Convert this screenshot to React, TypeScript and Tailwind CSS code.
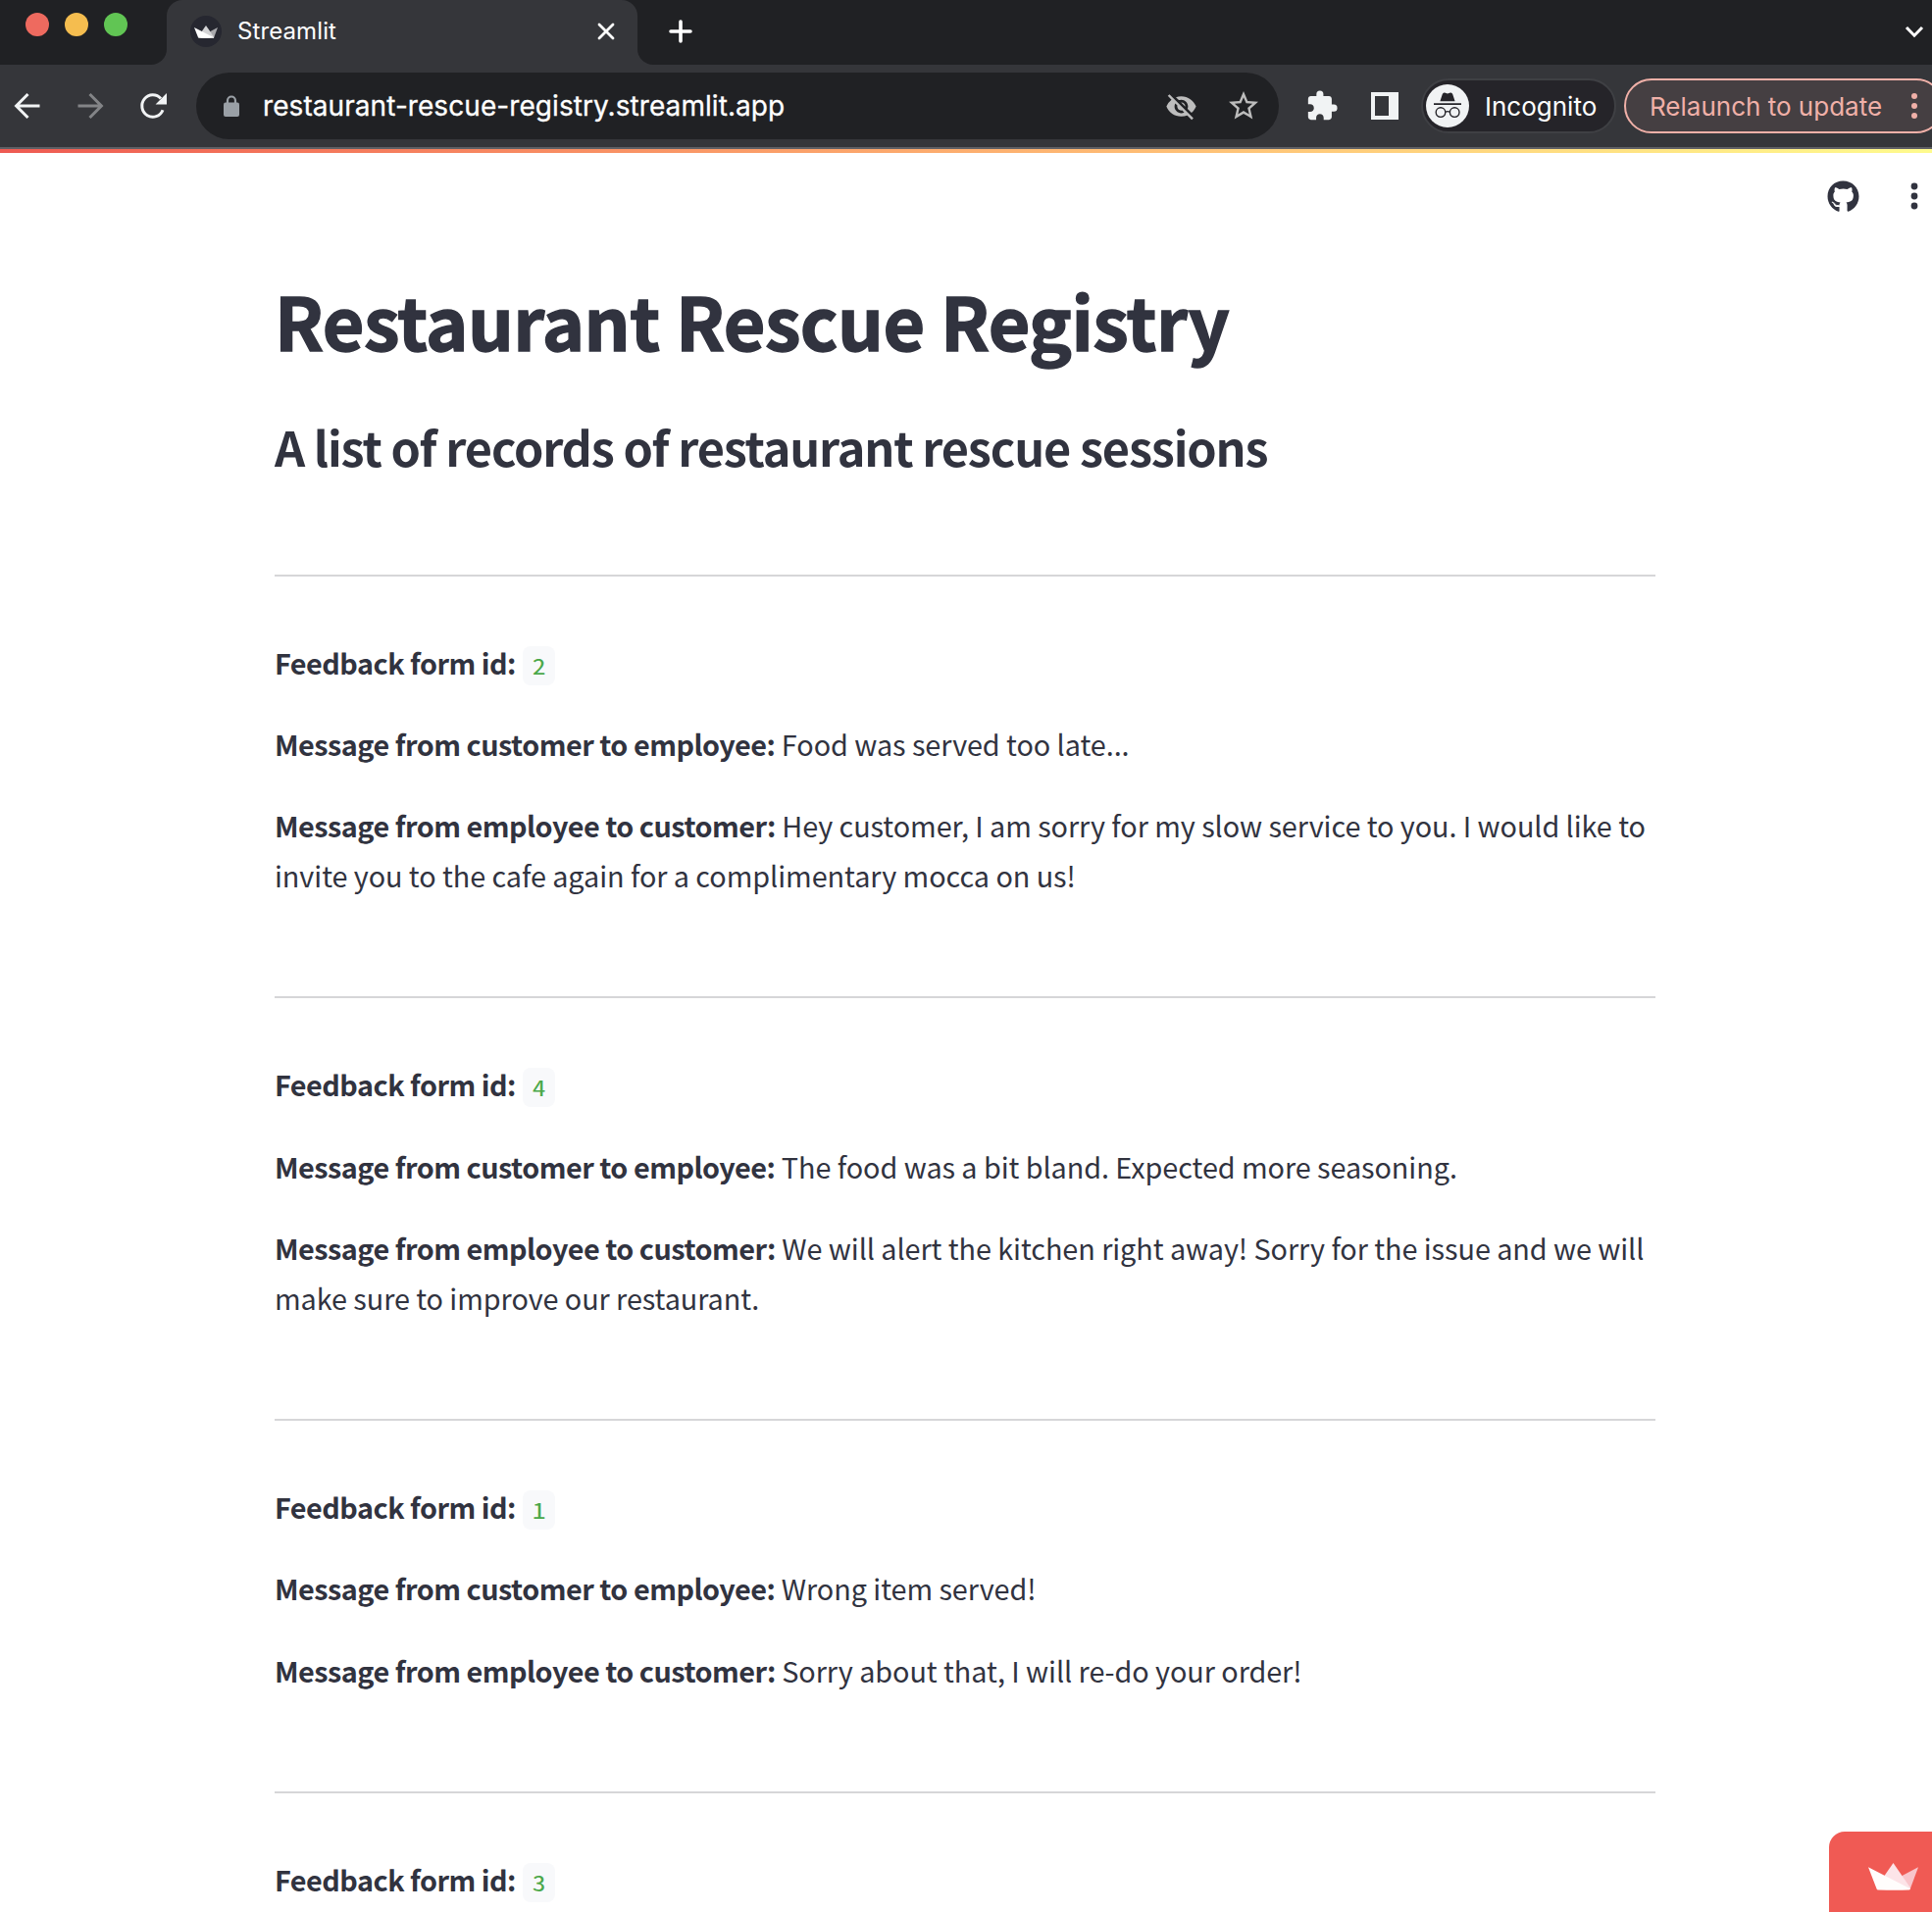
import { FaGithub } from "react-icons/fa";
import { MdExtension, MdStarBorder, MdVisibilityOff } from "react-icons/md";

type Entry = { id: number; fromCustomer: string; fromEmployee: string[] };

const entries: Entry[] = [
  {
    id: 2,
    fromCustomer: "Food was served too late...",
    fromEmployee: [
      "Hey customer, I am sorry for my slow service to you. I would like to",
      "invite you to the cafe again for a complimentary mocca on us!",
    ],
  },
  {
    id: 4,
    fromCustomer: "The food was a bit bland. Expected more seasoning.",
    fromEmployee: [
      "We will alert the kitchen right away! Sorry for the issue and we will",
      "make sure to improve our restaurant.",
    ],
  },
  {
    id: 1,
    fromCustomer: "Wrong item served!",
    fromEmployee: ["Sorry about that, I will re-do your order!"],
  },
  { id: 3, fromCustomer: "", fromEmployee: [] },
];

function Crown({ className, shades }: { className: string; shades: [string, string, string] }) {
  return (
    <svg className={className} viewBox="0 0 51 28" preserveAspectRatio="none">
      <path d="M51 4.2 34 13.2 42.6 27Z" fill={shades[2]} />
      <path d="M25.5 0 15.8 14 42.2 27.2 43 25.4Z" fill={shades[1]} />
      <path d="M0 4.2 42.8 26.2Q42.5 27.6 41.5 27.6 25.5 28.2 10 27.4 9 27.3 8.6 26.4Z" fill={shades[0]} />
    </svg>
  );
}

function TabStrip() {
  return (
    <div className="flex h-[66px] shrink-0 items-start bg-[#202124]">
      <div className="flex w-[154px] shrink-0 gap-4 pl-[26px] pt-[13px]">
        <span className="size-6 rounded-full bg-[#ee6a5f]" />
        <span className="size-6 rounded-full bg-[#f5bd4f]" />
        <span className="size-6 rounded-full bg-[#61c554]" />
      </div>
      <div className="flex h-[66px] w-4 shrink-0 items-end bg-[#35363a]">
        <div className="h-full w-full rounded-br-[16px] bg-[#202124]" />
      </div>
      <div className="h-[66px] w-[480px] shrink-0 bg-[#202124]">
        <div className="flex h-full items-center rounded-t-[16px] bg-[#35363a] pl-6 pr-[22px]">
          <span className="mb-[2px] flex size-8 items-center justify-center rounded-full bg-[#262730]">
            <Crown className="h-[13px] w-6" shades={["#ffffff", "#d4d4d6", "#a8a8ac"]} />
          </span>
          <span className="mb-[3px] ml-4 text-[24px] tracking-[0.1px] text-white">Streamlit</span>
          <svg className="mb-[2px] ml-auto size-[20px]" viewBox="0 0 20 20" stroke="#fff" strokeWidth="2.8" strokeLinecap="round">
            <path d="M3 3 17 17M17 3 3 17" />
          </svg>
        </div>
      </div>
      <div className="h-[66px] w-4 shrink-0 bg-[#35363a]">
        <div className="h-full w-full rounded-bl-[16px] bg-[#202124]" />
      </div>
      <svg className="ml-[16px] mt-[20px] size-6" viewBox="0 0 24 24" stroke="#fff" strokeWidth="3.6" strokeLinecap="round">
        <path d="M12 2V22M2 12H22" />
      </svg>
      <svg className="ml-auto mr-[8px] mt-[26px] h-[13px] w-5" viewBox="0 0 20 13" fill="none" stroke="#fff" strokeWidth="3">
        <path d="M2 2 10 10.2 18 2" />
      </svg>
    </div>
  );
}

function Toolbar() {
  return (
    <div className="flex h-[84px] shrink-0 items-center bg-[#35363a] pl-[14px]">
      <svg className="size-7 shrink-0" viewBox="0 0 28 28" fill="none" stroke="#f1f3f4" strokeWidth="3">
        <path d="M26.5 14H3M14.5 2 2.6 14 14.5 26" />
      </svg>
      <svg className="ml-9 size-7 shrink-0" viewBox="0 0 28 28" fill="none" stroke="#838487" strokeWidth="3">
        <path d="M1.5 14H25M13.5 2 25.4 14 13.5 26" />
      </svg>
      <svg className="ml-9 size-7 shrink-0" viewBox="0 0 28 28">
        <path d="M24 18.2A11 11.2 0 1 1 22 6.6" fill="none" stroke="#f1f3f4" strokeWidth="3" />
        <path d="M28 1V12.4H16.6Z" fill="#f1f3f4" />
      </svg>
      <div className="ml-[30px] flex h-[68px] w-[1104px] shrink-0 items-center rounded-full bg-[#202124] pl-[28px] pr-[18px]">
        <svg className="h-[22px] w-4" viewBox="0 0 16 22">
          <path d="M4 9V5.5a4 4 0 0 1 8 0V9" fill="none" stroke="#9aa0a6" strokeWidth="2.2" />
          <rect y="7.5" width="16" height="14.5" rx="2" fill="#9aa0a6" />
        </svg>
        <span className="ml-[24px] text-[28px] tracking-[0.07px] text-white [-webkit-text-stroke:0.3px_#fff]">
          restaurant-rescue-registry.streamlit.app
        </span>
        <MdVisibilityOff className="ml-auto size-[33px] text-[#bdbdbd]" />
        <MdStarBorder className="ml-[29px] size-9 text-[#bdbdbd]" />
      </div>
      <MdExtension className="ml-[27px] size-[34px] shrink-0 text-[#f1f3f4]" />
      <svg className="ml-[33px] size-7 shrink-0" viewBox="0 0 28 28">
        <path d="M0 0H28V28H0ZM4 4V24H18V4Z" fill="#f1f3f4" fillRule="evenodd" />
      </svg>
      <div className="ml-[23px] flex h-14 w-[199px] shrink-0 items-center rounded-full border-2 border-[#3f4044] bg-[#252429] pl-[3px]">
        <svg className="size-11 shrink-0" viewBox="0 0 44 44">
          <circle cx="22" cy="22" r="22" fill="#f1f3f4" />
          <path d="M14.4 17.2 16.8 10Q17.4 8.3 19 8.5L22 9.4 25 8.5Q26.6 8.3 27.2 10L29.6 17.2ZM8 19.2H36V21H8Z" fill="#252429" />
          <g fill="none" stroke="#252429" strokeWidth="1.4">
            <circle cx="15" cy="28.6" r="4.8" />
            <circle cx="29.2" cy="28.6" r="4.8" />
            <path d="M19.8 28.2Q22.1 27 24.4 28.2" />
          </g>
        </svg>
        <span className="ml-4 text-[26px] text-white">Incognito</span>
      </div>
      <div className="ml-[8px] flex h-14 w-[326px] shrink-0 items-center rounded-full border-2 border-[#f0b0a8] bg-[#453f42] pl-[24px] text-[#f0b0a8]">
        <span className="text-[26px]">Relaunch to update</span>
        <svg className="ml-auto mr-[25px] h-[26px] w-[6px]" viewBox="0 0 6 26" fill="currentColor">
          <circle cx="3" cy="3" r="3" />
          <circle cx="3" cy="13" r="3" />
          <circle cx="3" cy="23" r="3" />
        </svg>
      </div>
    </div>
  );
}

function FeedbackEntry({ entry }: { entry: Entry }) {
  return (
    <section className="border-t-2 border-[#d6d6d8] pb-[98px] pt-[62px]">
      <div className="flex flex-col gap-8 whitespace-nowrap text-[28.8px] leading-[51.2px] tracking-[-0.06px]">
        <div className="flex">
          <strong className="w-[246px] font-bold tracking-[-0.5px]">Feedback form id:</strong>
          <code className="ml-[7px] mt-[9px] flex h-10 w-[33px] items-center justify-center rounded-lg bg-[#f8f9fb] pb-[2px] font-['Noto_Sans_Mono_CJK_SC','Noto_Sans_CJK_SC',sans-serif] text-[22px] leading-none text-[#4ba84a]">
            <span className="scale-x-[1.25]">{entry.id}</span>
          </code>
        </div>
        {entry.fromCustomer && (
          <p>
            <strong className="font-bold tracking-[-0.5px]">Message from customer to employee:</strong> {entry.fromCustomer}
          </p>
        )}
        {entry.fromEmployee.length > 0 && (
          <p>
            <strong className="font-bold tracking-[-0.5px]">Message from employee to customer:</strong> {entry.fromEmployee[0]}
            {entry.fromEmployee.slice(1).map((line) => (
              <span key={line} className="block">
                {line}
              </span>
            ))}
          </p>
        )}
      </div>
    </section>
  );
}

export default function App() {
  return (
    <div className="relative flex h-[1950px] w-[1970px] flex-col overflow-hidden bg-white font-['Inter',sans-serif]">
      <TabStrip />
      <Toolbar />
      <div className="h-[2px] shrink-0 bg-[#5f6065]" />
      <div className="h-1 shrink-0 bg-linear-to-r from-[#ee5a52] to-[#fefb8d]" />
      <div className="flex h-[88px] shrink-0 items-center justify-end text-[#31333f]">
        <FaGithub className="size-[33px]" />
        <svg className="ml-[53px] mr-[15px] h-[28px] w-[6px] overflow-visible" viewBox="0 0 6 28" fill="currentColor">
          <circle cx="3" cy="4" r="3.4" />
          <circle cx="3" cy="14" r="3.4" />
          <circle cx="3" cy="24" r="3.4" />
        </svg>
      </div>
      <main className="ml-[280px] w-[1408px] font-['Noto_Sans_CJK_SC',sans-serif] text-[#31333f]">
        <h1 className="mt-[34px] whitespace-nowrap text-[73.6px] font-bold leading-[96px] tracking-[-0.52px] [-webkit-text-stroke:1.4px_#31333f]">
          Restaurant Rescue Registry
        </h1>
        <h2 className="mb-[94.6px] mt-[45px] whitespace-nowrap text-[48.6px] font-bold leading-[72px] tracking-[-1.16px]">
          A list of records of restaurant rescue sessions
        </h2>
        {entries.map((entry) => (
          <FeedbackEntry key={entry.id} entry={entry} />
        ))}
      </main>
      <div className="absolute bottom-0 right-0 h-[82px] w-[105px] rounded-tl-[16px] bg-[#f05a54] pl-10 pt-8">
        <Crown className="h-7 w-[51px]" shades={["#fffdfc", "#fce4e8", "#f8c5cb"]} />
      </div>
    </div>
  );
}
